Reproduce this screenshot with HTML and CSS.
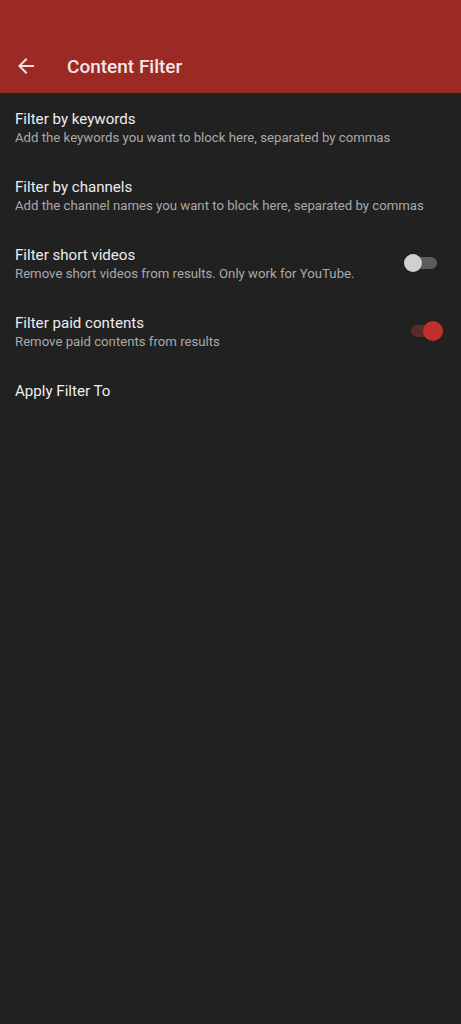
FILE: index.html
```html
<!DOCTYPE html>
<html lang="en">
<head>
    <meta charset="UTF-8">
    <meta name="viewport" content="width=device-width, initial-scale=1.0">
    <title>Content Filter</title>
    <link rel="stylesheet" href="styles.css">
</head>
<body>

    <!-- Шапка -->
    <div class="app-bar">
        <button class="back-button" aria-label="Back">
            <svg width="24" height="24" viewBox="0 0 24 24">
                <path d="M20 11H7.83l5.59-5.59L12 4l-8 8 8 8 1.41-1.41L7.83 13H20v-2z" fill="#f3e3e2"/>
            </svg>
        </button>
        <h1>Content Filter</h1>
    </div>

    <!-- Настройки -->
    <div class="settings">
        <div class="setting-row">
            <div class="setting-text">
                <div class="setting-title">Filter by keywords</div>
                <div class="setting-summary">Add the keywords you want to block here, separated by commas</div>
            </div>
        </div>
        <div class="setting-row">
            <div class="setting-text">
                <div class="setting-title">Filter by channels</div>
                <div class="setting-summary">Add the channel names you want to block here, separated by commas</div>
            </div>
        </div>
        <div class="setting-row">
            <div class="setting-text">
                <div class="setting-title">Filter short videos</div>
                <div class="setting-summary">Remove short videos from results. Only work for YouTube.</div>
            </div>
            <div class="switch"><div class="switch-thumb"></div></div>
        </div>
        <div class="setting-row">
            <div class="setting-text">
                <div class="setting-title">Filter paid contents</div>
                <div class="setting-summary">Remove paid contents from results</div>
            </div>
            <div class="switch on"><div class="switch-thumb"></div></div>
        </div>
        <div class="setting-row single">
            <div class="setting-text">
                <div class="setting-title">Apply Filter To</div>
            </div>
        </div>
    </div>

</body>
</html>
```

FILE: styles.css
```css
/* Сброс */
* {
    margin: 0;
    padding: 0;
    box-sizing: border-box;
    font-family: Roboto, "Noto Sans", Arial, sans-serif;
}

body {
    background-color: #212121;
    color: #ececec;
    min-height: 100vh;
}

/* Шапка */
.app-bar {
    height: 93px;
    background-color: #9b2a25;
    display: flex;
    align-items: flex-end;
    padding: 0 0 14px 14px;
}

.back-button {
    background: none;
    border: none;
    width: 24px;
    height: 24px;
    margin-bottom: 1px;
    display: flex;
}

.app-bar h1 {
    font-size: 19px;
    font-weight: 500;
    color: #f6e6e5;
    margin-left: 29px;
    line-height: 24px;
}

/* Список настроек */
.setting-row {
    display: flex;
    align-items: center;
    padding: 16px 18px 14px 15px;
    height: 68px;
}

.setting-row.single {
    align-items: flex-start;
}

.setting-text {
    flex: 1;
}

.setting-title {
    font-size: 15.1px;
    line-height: 20px;
    color: #ededed;
}

.setting-summary {
    font-size: 13.2px;
    line-height: 18px;
    color: #a9a9a9;
}

/* Переключатель */
.switch {
    position: relative;
    flex-shrink: 0;
    width: 32px;
    height: 12px;
    border-radius: 6px;
    background-color: #5c5c5c;
    margin: 0 6px 2px 0;
}

.switch-thumb {
    position: absolute;
    top: -3px;
    left: -1px;
    width: 18px;
    height: 18px;
    border-radius: 50%;
    background-color: #d0d0d0;
}

.switch.on {
    background-color: #5b2a28;
    margin: 0 0 2px -6px;
}

.switch.on .switch-thumb {
    left: 12px;
    width: 20px;
    height: 20px;
    top: -4px;
    background-color: #c1302b;
}
```
